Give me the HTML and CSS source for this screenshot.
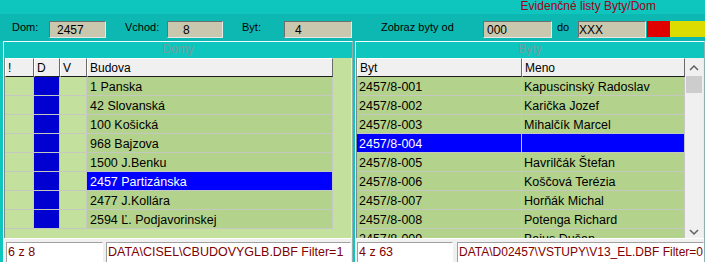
FILE: index.html
```html
<!doctype html>
<html lang="sk">
<head>
    <meta charset="UTF-8">
    <title>Evidenčné listy Byty/Dom</title>
    <link rel="stylesheet" href="styles.css">
</head>
<body>
    <!-- Title -->
    <div class="titlebar">
        <span class="title">Evidenčné listy Byty/Dom</span>
    </div>

    <!-- Filter bar -->
    <div class="toolbar">
        <span class="lbl lbl-dom">Dom:</span>
        <div class="field f-dom">2457</div>
        <span class="lbl lbl-vchod">Vchod:</span>
        <div class="field f-vchod">8</div>
        <span class="lbl lbl-byt">Byt:</span>
        <div class="field f-byt">4</div>
        <span class="lbl lbl-od">Zobraz byty od</span>
        <div class="field f-od">000</div>
        <span class="lbl lbl-do">do</span>
        <div class="field f-do">XXX</div>
        <div class="swatch red"></div>
        <div class="swatch yellow"></div>
    </div>

    <div class="panels">
        <!-- Domy -->
        <div class="panel panel-domy">
            <div class="panel-title">Domy</div>
            <div class="grid grid-domy">
                <div class="table">
                    <div class="row head">
                        <div class="cell c-ex">!</div>
                        <div class="cell c-d">D</div>
                        <div class="cell c-v">V</div>
                        <div class="cell c-bud">Budova</div>
                    </div>
                    <div class="row"><div class="cell c-ex"></div><div class="cell c-d"></div><div class="cell c-v"></div><div class="cell c-bud">1 Panska</div></div>
                    <div class="row"><div class="cell c-ex"></div><div class="cell c-d"></div><div class="cell c-v"></div><div class="cell c-bud">42 Slovanská</div></div>
                    <div class="row"><div class="cell c-ex"></div><div class="cell c-d"></div><div class="cell c-v"></div><div class="cell c-bud">100 Košická</div></div>
                    <div class="row"><div class="cell c-ex"></div><div class="cell c-d"></div><div class="cell c-v"></div><div class="cell c-bud">968 Bajzova</div></div>
                    <div class="row"><div class="cell c-ex"></div><div class="cell c-d"></div><div class="cell c-v"></div><div class="cell c-bud">1500 J.Benku</div></div>
                    <div class="row sel"><div class="cell c-ex"></div><div class="cell c-d"></div><div class="cell c-v"></div><div class="cell c-bud">2457 Partizánska</div></div>
                    <div class="row"><div class="cell c-ex"></div><div class="cell c-d"></div><div class="cell c-v"></div><div class="cell c-bud">2477 J.Kollára</div></div>
                    <div class="row"><div class="cell c-ex"></div><div class="cell c-d"></div><div class="cell c-v"></div><div class="cell c-bud">2594 Ľ. Podjavorinskej</div></div>
                </div>
            </div>
            <div class="status">
                <div class="sbox s-count">6 z 8</div>
                <div class="sbox s-file">DATA\CISEL\CBUDOVYGLB.DBF Filter=1</div>
            </div>
        </div>

        <!-- Byty -->
        <div class="panel panel-byty">
            <div class="panel-title">Byty</div>
            <div class="grid grid-byty">
                <div class="table">
                    <div class="row head">
                        <div class="cell c-byt">Byt</div>
                        <div class="cell c-meno">Meno</div>
                    </div>
                    <div class="row"><div class="cell c-byt">2457/8-001</div><div class="cell c-meno">Kapuscinský Radoslav</div></div>
                    <div class="row"><div class="cell c-byt">2457/8-002</div><div class="cell c-meno">Karička Jozef</div></div>
                    <div class="row"><div class="cell c-byt">2457/8-003</div><div class="cell c-meno">Mihalčík Marcel</div></div>
                    <div class="row sel"><div class="cell c-byt">2457/8-004</div><div class="cell c-meno"></div></div>
                    <div class="row"><div class="cell c-byt">2457/8-005</div><div class="cell c-meno">Havrilčák Štefan</div></div>
                    <div class="row"><div class="cell c-byt">2457/8-006</div><div class="cell c-meno">Koščová Terézia</div></div>
                    <div class="row"><div class="cell c-byt">2457/8-007</div><div class="cell c-meno">Horňák Michal</div></div>
                    <div class="row"><div class="cell c-byt">2457/8-008</div><div class="cell c-meno">Potenga Richard</div></div>
                    <div class="row"><div class="cell c-byt">2457/8-009</div><div class="cell c-meno">Bajus Dušan</div></div>
                </div>
                <div class="scrollbar">
                    <div class="sb-btn sb-up">
                        <svg width="18" height="18" viewBox="0 0 18 18"><polyline points="5,12 9,8 13,12" fill="none" stroke="#606060" stroke-width="1.5"/></svg>
                    </div>
                    <div class="sb-thumb"></div>
                    <div class="sb-track"></div>
                    <div class="sb-btn sb-down">
                        <svg width="18" height="18" viewBox="0 0 18 18"><polyline points="5,10 9,14 13,10" fill="none" stroke="#606060" stroke-width="1.5"/></svg>
                    </div>
                </div>
            </div>
            <div class="status">
                <div class="sbox s-count">4 z 63</div>
                <div class="sbox s-file">DATA\D02457\VSTUPY\V13_EL.DBF Filter=0</div>
            </div>
        </div>
    </div>
</body>
</html>
```

FILE: styles.css
```css
* {
    box-sizing: border-box;
}

body {
    margin: 0;
    width: 705px;
    height: 262px;
    overflow: hidden;
    background-color: #0fc6bf;
    font-family: "Liberation Sans", Arial, sans-serif;
    color: #000;
}

/* Title band */
.titlebar {
    height: 14px;
    display: flex;
    justify-content: flex-end;
    padding-right: 49px;
}

.title {
    font-size: 12px;
    line-height: 13px;
    color: #a00014;
}

/* Filter bar */
.toolbar {
    height: 27px;
    padding: 7px 0 0 12px;
    background-color: #0cb8b1;
    display: flex;
    align-items: flex-start;
    font-size: 11px;
}

.lbl {
    line-height: 13px;
}

.lbl-dom { width: 37px; }
.lbl-vchod { width: 42px; margin-left: 19px; }
.lbl-byt { width: 42px; margin-left: 19px; }
.lbl-od { width: 102px; margin-left: 29px; }
.lbl-do { width: 21px; margin-left: 5px; }

.field {
    height: 17px;
    background-color: #c9c8ae;
    border: 1px solid;
    border-color: #6e6e6e #e8e8e8 #e8e8e8 #6e6e6e;
    font-size: 12px;
    line-height: 14px;
    padding-top: 1px;
}

.f-dom { width: 57px; padding-left: 7px; }
.f-vchod { width: 56px; padding-left: 15px; }
.f-byt { width: 68px; padding-left: 10px; }
.f-od { width: 69px; padding-left: 3px; }
.f-do { width: 68px; padding-left: 0; }

.swatch {
    height: 16px;
}

.red { width: 23px; margin-left: 1px; background-color: #e00000; }
.yellow { width: 35px; background-color: #dcdc00; }

/* Panels */
.panels {
    display: flex;
    height: 221px;
}

.panel {
    width: 350px;
    border-top: 1px solid #f4ffff;
    border-left: 1px solid #f4ffff;
    border-right: 1px solid #8fb0ae;
    display: flex;
    flex-direction: column;
}

.panel-domy { margin-left: 3px; }
.panel-byty { margin-left: 2px; }

.panel-title {
    height: 16px;
    line-height: 15px;
    text-align: center;
    font-size: 12px;
    color: #6f9e9c;
}

.grid {
    height: 180px;
    flex: none;
    border-left: 1px solid #7a8a8a;
    border-right: 1px solid #e4eeee;
    display: flex;
    overflow: hidden;
}

.grid-domy { background-color: #c3e19d; }
.grid-byty { background-color: #b3d28b; }

.table {
    width: 328px;
    display: flex;
    flex-direction: column;
}

.row {
    display: flex;
    flex: none;
}

.cell {
    height: 19px;
    padding: 3px 3px 0;
    line-height: 15px;
    font-size: 12.5px;
    border-right: 1px solid #c4c8c0;
    border-bottom: 1px solid #c4c8c0;
    white-space: nowrap;
    overflow: hidden;
}

.c-ex { width: 29px; }
.c-d { width: 26px; background-color: #0000d0; }
.c-v { width: 27px; }
.c-bud { width: 246px; background-color: #b3d28b; }
.c-byt { width: 165px; padding-left: 2px; }
.c-meno { width: 163px; padding-left: 2px; }

.head .cell {
    background-color: #f0f0f0;
    border-top: 1px solid #fff;
    border-left: 1px solid #fff;
    border-right: 1px solid #6a6a6a;
    border-bottom: 1px solid #1e1e1e;
    padding-top: 2px;
    padding-left: 2px;
    font-size: 12px;
}

.sel .c-bud,
.sel .c-byt,
.sel .c-meno {
    background-color: #0000ff;
    color: #fff;
}

/* Scrollbar */
.scrollbar {
    width: 18px;
    background-color: #f0f0f0;
    display: flex;
    flex-direction: column;
}

.sb-btn {
    height: 18px;
    flex: none;
}

.sb-btn svg {
    display: block;
}

.sb-thumb {
    height: 17px;
    margin: 0 1px;
    background-color: #cdcdcd;
}

.sb-track {
    flex: 1;
}

/* Status line */
.status {
    height: 24px;
    flex: none;
    background-color: #f0f0f0;
    border-top: 1px solid #fff;
    display: flex;
    gap: 3px;
    padding: 3px 1px 0 2px;
}

.panel-byty .status {
    padding: 3px 0 0 1px;
    gap: 4px;
}

.sbox {
    height: 22px;
    background-color: #fff;
    border: 1px solid;
    border-color: #a0a0a0 #fff #fff #a0a0a0;
    padding-left: 1px;
    font-size: 12.5px;
    line-height: 18px;
    color: #800000;
    white-space: nowrap;
    overflow: hidden;
}

.s-count { width: 97px; }
.s-file { flex: 1; }
.panel-byty .s-count { width: 96px; }
.panel-byty .s-file { font-size: 12px; }
```
